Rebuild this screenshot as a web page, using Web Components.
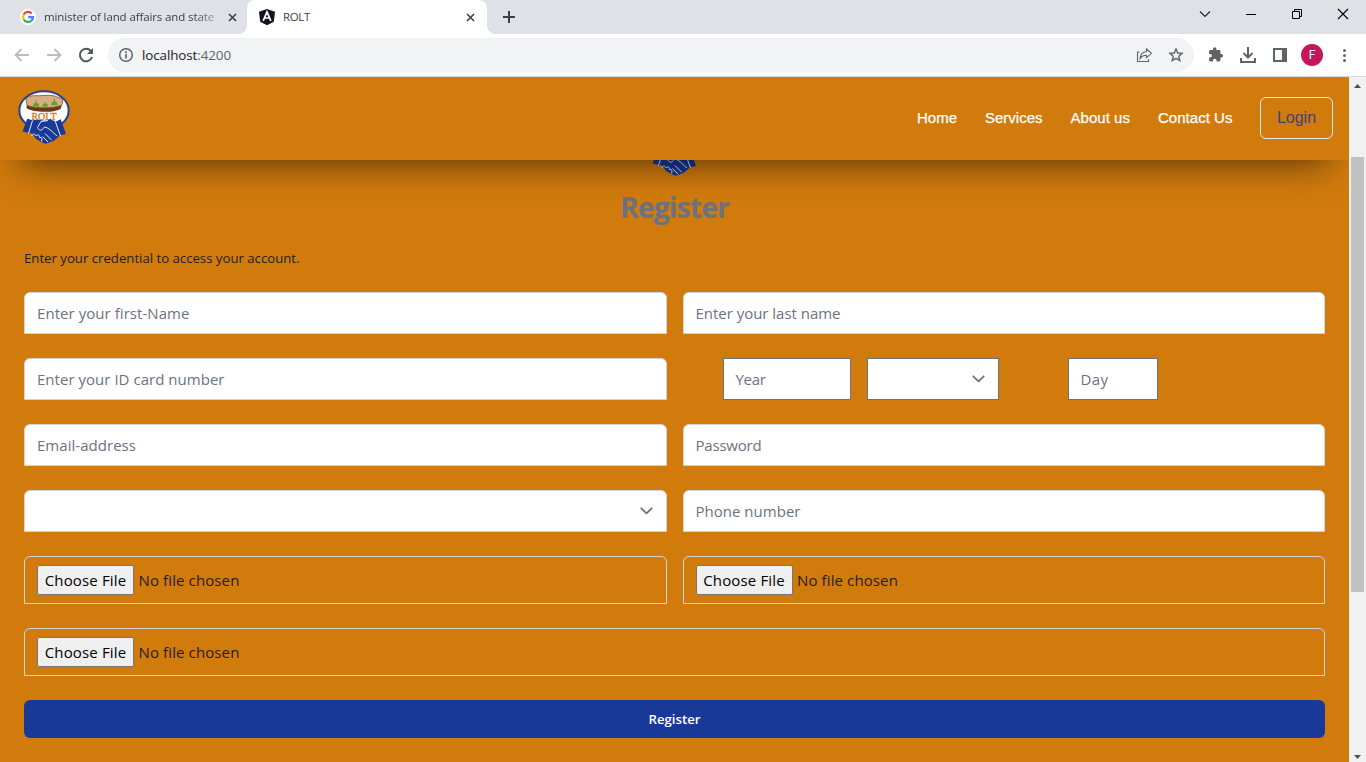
<!DOCTYPE html>
<html lang="en">
<head>
<meta charset="utf-8">
<title>ROLT</title>
<style>
html,body{margin:0;height:100%;overflow:hidden}
body{font-family:"Open Sans","Noto Sans",sans-serif;background:#fff}
</style>
</head>
<body>
<app-window></app-window>
<script>
function define(name, html, setup) {
  const template = document.createElement('template');
  template.innerHTML = html;
  customElements.define(name, class extends HTMLElement {
    constructor() {
      super();
      this.attachShadow({ mode: 'open' }).append(template.content.cloneNode(true));
    }
    connectedCallback() { if (setup) setup(this, this.shadowRoot); }
  });
}

define('tab-strip', `
<style>
:host{display:flex;height:34px;background:#dee1e6;font-size:11.5px;color:#3c4043}
.tab{display:flex;align-items:center;box-sizing:border-box;height:34px}
.first{width:247px;padding-left:20px}
.t{padding-bottom:1px}
.first .t{margin-left:8px;width:172px;overflow:hidden;-webkit-mask-image:linear-gradient(90deg,#000 150px,rgba(0,0,0,.35) 172px)}
.active{position:relative;width:240px;background:#fff;border-radius:8px 8px 0 0;padding-left:11px}
.active::before,.active::after{content:"";position:absolute;bottom:0;width:8px;height:8px}
.active::before{left:-8px;background:radial-gradient(circle at 0 0,transparent 7.5px,#fff 8px)}
.active::after{right:-8px;background:radial-gradient(circle at 100% 0,transparent 7.5px,#fff 8px)}
.active .t{margin-left:7px;flex:1}
svg{display:block;flex:none}
.x1{margin-left:12px}.x2{margin-right:12px}
.plus{margin:10px 0 0 15px}
.ctl{margin-left:auto;display:flex;height:28px}
.ctl svg{width:46px;height:28px}
</style>
<div class="tab first">
<svg width="16" height="16" viewBox="0 0 16 16"><circle cx="8" cy="8" r="8" fill="#fff"/><g fill="none" stroke-width="2.3"><path d="M11.7 4.5A5 5 0 0 0 3.7 5.5" stroke="#ea4335"/><path d="M3.7 5.5a5 5 0 0 0 0 5" stroke="#fbbc05"/><path d="M3.7 10.5A5 5 0 0 0 11.2 11.8" stroke="#34a853"/><path d="M11.2 11.8A5 5 0 0 0 13 8.1H8.2" stroke="#4285f4"/></g></svg>
<div class="t"><ui-text w="170">minister of land affairs and state</ui-text></div>
<svg class="x1" width="9" height="9" viewBox="0 0 9 9"><path d="M1 1l7 7M8 1l-7 7" stroke="#3c4043" stroke-width="1.6"/></svg>
</div>
<div class="tab active">
<svg width="18" height="18" viewBox="0 0 18 18"><path d="M9 1l8 2.7-1.2 10L9 17.3 2.200 13.700 1 3.700z" fill="#10151f"/><path d="M5.200 12.800L9 4l3.800 8.800M6.700 10h4.600" fill="none" stroke="#fff" stroke-width="1.7"/></svg>
<div class="t"><ui-text w="27">ROLT</ui-text></div>
<svg class="x2" width="9" height="9" viewBox="0 0 9 9"><path d="M1 1l7 7M8 1l-7 7" stroke="#3c4043" stroke-width="1.600"/></svg>
</div>
<svg class="plus" width="14" height="14" viewBox="0 0 14 14"><path d="M7 1v12M1 7h12" stroke="#3c4043" stroke-width="2"/></svg>
<div class="ctl">
<svg viewBox="0 0 46 28"><path d="M18 11.500l5 5 5-5" fill="none" stroke="#222" stroke-width="1.100"/></svg>
<svg viewBox="0 0 46 28"><path d="M18 14.500h10" stroke="#000"/></svg>
<svg viewBox="0 0 46 28"><path d="M18.500 11.500h7v7h-7zM20.500 11.500v-2h7v7h-2" fill="none" stroke="#000"/></svg>
<svg viewBox="0 0 46 28"><path d="M18 9l10 10M28 9L18 19" stroke="#000" stroke-width="1.100"/></svg>
</div>`);

define('tool-bar', `
<style>
:host{display:flex;align-items:center;box-sizing:border-box;height:43px;padding:0 6px 1px;background:#fff;border-bottom:1px solid #d9dbde;font-size:13.4px}
svg{display:block;flex:none;width:32px;height:32px}
.pill{display:flex;align-items:center;width:1086px;height:34px;margin:0 6px;border-radius:17px;background:#f1f3f4;box-sizing:border-box;padding:0 2px}
.url{flex:1;color:#5f6368}.url b{font-weight:400;color:#202124}
.av{width:22px;height:22px;margin:0 5px;border-radius:50%;background:#c2185b;color:#fff;display:flex;align-items:center;justify-content:center;font:12px Roboto,sans-serif}
</style>
<svg viewBox="0 0 32 32"><path d="M23 16H10M15.500 10l-6 6 6 6" fill="none" stroke="#babcbe" stroke-width="1.800"/></svg>
<svg viewBox="0 0 32 32"><path d="M9 16h13M16.500 10l6 6-6 6" fill="none" stroke="#babcbe" stroke-width="1.800"/></svg>
<svg viewBox="0 0 32 32"><path d="M20.800 12A6.200 6.200 0 1 0 22 18" fill="none" stroke="#54585d" stroke-width="2"/><path d="M23 9v6h-6z" fill="#54585d"/></svg>
<div class="pill">
<svg viewBox="0 0 32 32"><circle cx="16" cy="16" r="6.300" fill="none" stroke="#5f6368" stroke-width="1.500"/><path d="M16 15v4.500M16 12.200v1.700" stroke="#5f6368" stroke-width="1.700"/></svg>
<div class="url"><ui-text w="89"><b>localhost</b>:4200</ui-text></div>
<svg viewBox="0 0 32 32"><path d="M11.500 13H9.500v9.500h11V20M18.500 10l5 4.300-5 4.300V16.300c-3 0-5 1-6.500 3 .3-4 2.800-6.300 6.500-6.800z" fill="none" stroke="#5f6368" stroke-width="1.100"/></svg>
<svg viewBox="0 0 32 32"><path d="M16 10l1.700 4 4.400.4-3.300 2.900 1 4.300-3.800-2.300-3.800 2.300 1-4.300-3.300-2.900 4.400-.4z" fill="none" stroke="#5f6368" stroke-width="1.400"/></svg>
</div>
<svg viewBox="0 0 32 32"><g transform="translate(7.700 7.700) scale(.67)"><path d="M20.500 11H19V7c0-1.100-.9-2-2-2h-4V3.500a2.500 2.500 0 0 0-5 0V5H4c-1.100 0-2 .9-2 2v3.800h1.500a2.700 2.700 0 0 1 0 5.400H2V20c0 1.100.9 2 2 2h3.800v-1.500a2.700 2.700 0 0 1 5.400 0V22H17c1.100 0 2-.9 2-2v-4h1.500a2.500 2.500 0 0 0 0-5z" fill="#5f6368"/></g></svg>
<svg viewBox="0 0 32 32"><path d="M16 8v10M11.500 14l4.500 4.500 4.500-4.500M9 19v4h14v-4" fill="none" stroke="#5f6368" stroke-width="2"/></svg>
<svg viewBox="0 0 32 32"><path d="M9 9h14v14H9z" fill="#5f6368"/><path d="M11 11h7v10h-7z" fill="#fff"/></svg>
<div class="av">F</div>
<svg viewBox="0 0 32 32"><g fill="#5f6368"><circle cx="16.500" cy="11.500" r="1.500"/><circle cx="16.500" cy="16.500" r="1.500"/><circle cx="16.500" cy="21.500" r="1.500"/></g></svg>`);

define('rolt-logo', `
<style>:host{display:block;width:52px;height:55px}svg{display:block}</style>
<svg width="52" height="55" viewBox="0 0 52 55">
<ellipse cx="26" cy="20.500" rx="24.700" ry="19.200" fill="#fff" stroke="#23409b" stroke-width="2"/>
<path d="M9 14L8.400 18c6 4.800 29 5.300 34.500 .5l1.600-6.500z" fill="#6b3819"/>
<path d="M9.300 7.200c3-1.700 7-1.500 11-1.500 5 0 10-.8 15 0 3 .5 4 2 8 2.500 1.700 1.500 1.800 5 .3 7-8 3.500-27 3.300-34.300.3C8.300 13 7.600 9.500 9.300 7.200z" fill="#d9ad84" stroke="#7d4c28" stroke-width=".8"/>
<path d="M14.800 16.500l1-3.500 1 1 1-4 1.500 4 1-1 1.200 3.500zM24.300 16.500l.8-3 1 1 1.200-3.500.9 3.500 1-1 .8 3zM33 15.200l1-3.500 1.200.5 1.100-4.500 1.400 4.500 1-.5 1.200 3.500z" fill="#57a52c"/>
<text x="13.500" y="30" font-family="Liberation Serif,serif" font-size="11" textLength="25" lengthAdjust="spacingAndGlyphs" fill="#d0791a" stroke="#d0791a" stroke-width=".35">ROLT</text>
<path d="M9.300 28.700l5.200 1.600 6-.5 6 1 6-1.500 5 2.500 5.200-2.500 5.300 14.700-6.300 1.500-3 3-3 2.200-4.500 1.700-4 1.400-4-1.800-5-3-4.500-5.400L4.500 41.500z" fill="#193999"/>
<path d="M14.500 30.500l-4 13M37.500 32l5 14M19.500 37.500c1.500 3.500 4.500 3.500 7-.5 4 .5 8 5 12.500 9M27 43.500l6.500 6.500M24.500 46.500l5.500 5.500M19.500 37.500l3.500-6 7-.9M13.500 46c2-3.300 4-1.500 4.500 0 2-2.200 4-.5 3.500 1.500 2.500-.5 3 1 2 4" fill="none" stroke="#e8ecf8" stroke-width="1"/>
</svg>`);

define('site-header', `
<style>
:host{display:flex;position:relative;z-index:2;flex:none;height:83px;box-sizing:border-box;padding:0 16px 2px 18px;align-items:center;background:#d17b0d;box-shadow:0 21px 38px -20px rgba(0,0,0,.66);font-family:"Liberation Sans",Arial,sans-serif}
nav{margin-left:auto;display:flex;align-items:center;gap:28px;color:#fff;font-size:15px;-webkit-text-stroke:.25px #fff}
nav>ui-text{position:relative;left:.5px}
rolt-logo{margin-top:-1px}
.login{box-sizing:border-box;width:73px;height:42px;border:1px solid #e5e7eb;border-radius:6px;display:flex;align-items:center;justify-content:center;font-size:16px;-webkit-text-stroke:0;color:#41427a}
</style>
<rolt-logo></rolt-logo>
<nav><ui-text w="40">Home</ui-text><ui-text w="57.500">Services</ui-text><ui-text w="59.500">About us</ui-text><ui-text w="74.500">Contact Us</ui-text><div class="login"><ui-text w="39">Login</ui-text></div></nav>`);

define('form-field', `
<style>
:host{display:flex;align-items:center;box-sizing:border-box;height:42px;padding:0 12px;background:#fff;border:1px solid #d1d5db;border-radius:6px 6px 0 0;color:#6b7280;font-size:15px}
:host([square]){border-color:#6b7280;border-radius:0}
svg{display:none;margin-left:auto;margin-right:1px}
:host([select]) svg{display:block}
</style><slot></slot>
<svg width="13" height="8" viewBox="0 0 13 8"><path d="M1.300 1.300l5.200 5 5.200-5" fill="none" stroke="#6b7280" stroke-width="1.800" stroke-linecap="round" stroke-linejoin="round"/></svg>`);

define('file-field', `
<style>
:host{display:flex;align-items:center;box-sizing:border-box;height:48px;padding:0 12px;border:1px solid #d1d5db;border-radius:6px 6px 0 0;color:#1f2020;font-size:15px}
.b{box-sizing:border-box;width:97px;height:30px;border:1px solid #767676;border-radius:2px;background:#efefef;color:#000;display:flex;align-items:center;justify-content:center;margin-right:4.500px}
</style>
<div class="b"><ui-text w="81.500">Choose File</ui-text></div><ui-text w="101">No file chosen</ui-text>`);

define('register-page', `
<style>
:host{display:flex;flex-direction:column;flex:1;margin-top:-38px;padding:0 24px;box-sizing:border-box}
rolt-logo{margin:0 auto;position:relative;left:-1px}
h1{margin:12px 0 0;height:36px;line-height:36px;font-size:28.500px;font-weight:700;color:#6b7280;text-align:center}
p{margin:23px 0 24px;height:20px;line-height:20px;font-size:13.200px;color:#1f2020}
.g{display:grid;grid-template-columns:1fr 1fr;gap:24px 16px}
.wide{grid-column:1/-1}
.dob{display:flex;padding-left:40px}
.y{width:128px;margin-right:16px}.m{width:132px;margin-right:69px}.d{width:90px}
.btn{display:flex;align-items:center;justify-content:center;height:38px;border-radius:6px;background:#193999;color:#fff;font-size:13.200px;font-weight:600}
</style>
<rolt-logo></rolt-logo>
<h1><ui-text w="109">Register</ui-text></h1>
<p><ui-text w="275.500">Enter your credential to access your account.</ui-text></p>
<div class="g">
<form-field><ui-text w="152.500">Enter your first-Name</ui-text></form-field>
<form-field><ui-text w="145">Enter your last name</ui-text></form-field>
<form-field><ui-text w="187.500">Enter your ID card number</ui-text></form-field>
<div class="dob"><form-field square class="y"><ui-text w="30">Year</ui-text></form-field><form-field square select class="m"></form-field><form-field square class="d"><ui-text w="28">Day</ui-text></form-field></div>
<form-field><ui-text w="99">Email-address</ui-text></form-field>
<form-field><ui-text w="66">Password</ui-text></form-field>
<form-field select></form-field>
<form-field><ui-text w="105">Phone number</ui-text></form-field>
<file-field></file-field><file-field></file-field>
<file-field class="wide"></file-field>
<div class="btn wide"><ui-text w="52">Register</ui-text></div>
</div>`);

define('scroll-bar', `
<style>
:host{display:flex;flex-direction:column;width:17px;background:#f1f1f1}
svg{display:block;flex:none}
.thumb{width:13px;height:435px;margin:63px 2px auto;background:#c1c1c1}
</style>
<svg width="17" height="17" viewBox="0 0 17 17"><path d="M5 11l3.500-4L12 11z" fill="#505050"/></svg>
<div class="thumb"></div>
<svg width="17" height="17" viewBox="0 0 17 17"><path d="M5 10l3.500 4L12 10z" fill="#505050"/></svg>`);

define('app-window', `
<style>
:host{display:flex;flex-direction:column;width:1366px;height:762px;overflow:hidden}
.v{flex:1;display:flex;min-height:0}
.p{flex:1;display:flex;flex-direction:column;overflow:hidden;background:#d17b0d}
</style>
<tab-strip></tab-strip><tool-bar></tool-bar>
<div class="v"><div class="p"><site-header></site-header><register-page></register-page></div><scroll-bar></scroll-bar></div>`);

/* A single line of text whose tracking is adjusted to fill a given width. */
define('ui-text', `<style>:host{display:inline-block;white-space:nowrap}</style><slot></slot>`, host => {
  const wanted = parseFloat(host.getAttribute('w'));
  host.style.letterSpacing = '0px';
  const natural = host.getBoundingClientRect().width;
  if (wanted && natural) {
    host.style.letterSpacing = ((wanted - natural) / host.textContent.length).toFixed(3) + 'px';
  }
});
</script>
</body>
</html>
